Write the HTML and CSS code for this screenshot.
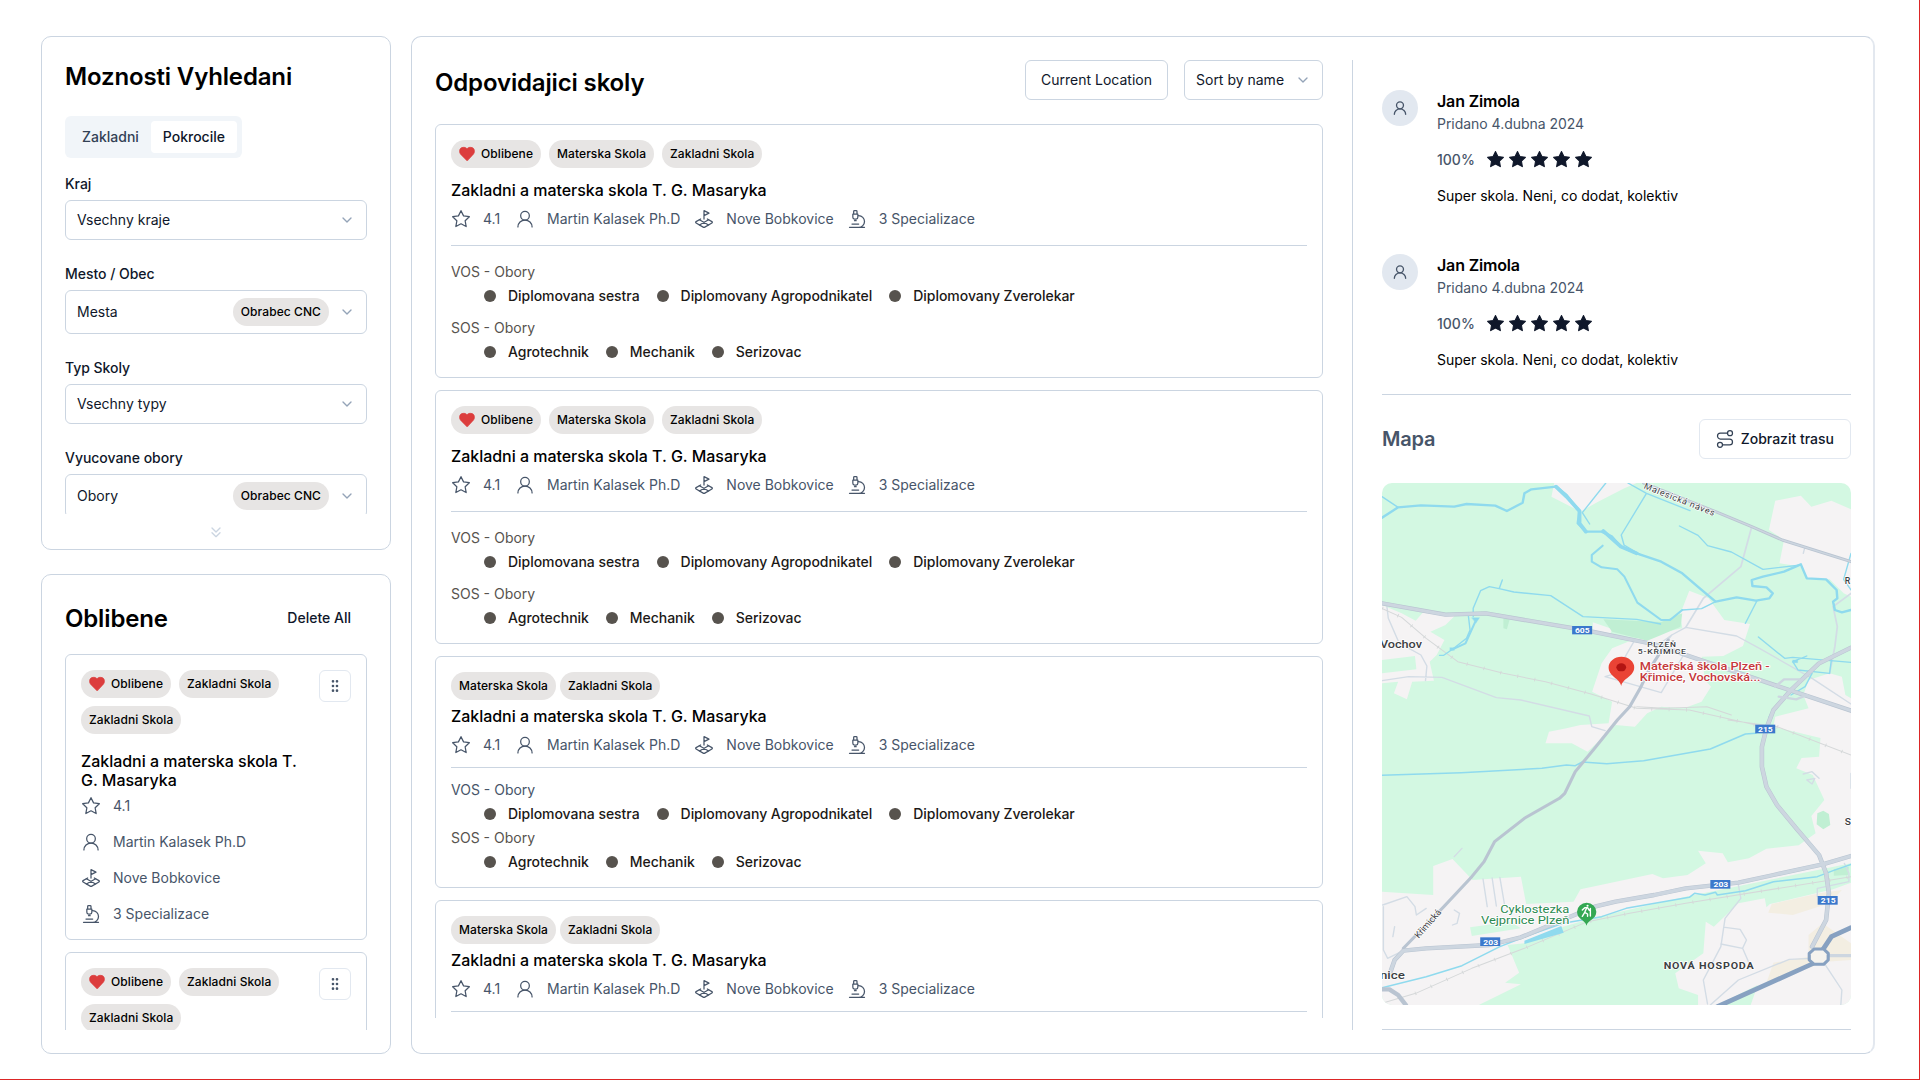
FILE: index.html
```html
<!DOCTYPE html>
<html lang="cs">
<head>
<meta charset="utf-8">
<title>Vyhledavani skol</title>
<link rel="stylesheet" href="styles.css">
</head>
<body>
<svg class="sprite" aria-hidden="true">
  <symbol id="chevron" viewBox="0 0 24 24"><path d="m6 9 6 6 6-6"/></symbol>
  <symbol id="chevrons" viewBox="0 0 24 24"><path d="m6 6 6 6 6-6M6 13l6 6 6-6"/></symbol>
  <symbol id="star" viewBox="0 0 24 24"><path d="M12 2l3.09 6.26L22 9.27l-5 4.87 1.18 6.88L12 17.77l-6.18 3.25L7 14.14 2 9.27l6.91-1.01z"/></symbol>
  <symbol id="user" viewBox="0 0 24 24"><circle cx="12" cy="8" r="5.2"/><path d="M20.5 21.5a8.5 8.3 0 0 0-17 0"/></symbol>
  <symbol id="plot" viewBox="0 0 24 24"><path d="m12 8 6-3-6-3v10"/><path d="m8 11.99-5.5 3.14a1 1 0 0 0 0 1.74l8.5 4.86a2 2 0 0 0 2 0l8.5-4.86a1 1 0 0 0 0-1.74L16 12"/><path d="m6.49 12.85 11.02 6.3M17.51 12.85 6.5 19.15"/></symbol>
  <symbol id="micro" viewBox="0 0 24 24"><path d="M6 18h8M3 22h18M14 22a7 7 0 1 0 0-14h-1M9 14h2M9 12a2 2 0 0 1-2-2V6h6v4a2 2 0 0 1-2 2ZM12 6V3a1 1 0 0 0-1-1H9a1 1 0 0 0-1 1v3"/></symbol>
  <symbol id="route" viewBox="0 0 24 24"><circle cx="6" cy="19" r="3"/><path d="M9 19h8.5a3.5 3.5 0 0 0 0-7h-11a3.5 3.5 0 0 1 0-7H15"/><circle cx="18" cy="5" r="3"/></symbol>
  <symbol id="grip" viewBox="0 0 24 24"><circle cx="9" cy="5" r="1"/><circle cx="9" cy="12" r="1"/><circle cx="9" cy="19" r="1"/><circle cx="15" cy="5" r="1"/><circle cx="15" cy="12" r="1"/><circle cx="15" cy="19" r="1"/></symbol>
  <symbol id="heart" viewBox="1.2 1.5 21.6 21"><path d="M19 14c1.49-1.46 3-3.21 3-5.5A5.5 5.5 0 0 0 16.5 3c-1.76 0-3 .5-4.5 2-1.5-1.5-2.74-2-4.5-2A5.5 5.5 0 0 0 2 8.5c0 2.300 1.500 4.050 3 5.500l7 7z"/></symbol>
</svg>

<div class="page">
  <aside class="sidebar">
    <section class="panel search">
      <h2 class="heading">Moznosti Vyhledani</h2>
      <div class="search-scroll">
        <div class="tabs"><span class="tab">Zakladni</span><span class="tab active">Pokrocile</span></div>
        <div class="field"><label>Kraj</label><div class="select"><span>Vsechny kraje</span><svg class="i16 chev"><use href="#chevron"/></svg></div></div>
        <div class="field"><label>Mesto / Obec</label><div class="select"><span>Mesta</span><b class="pill">Obrabec CNC</b><svg class="i16 chev"><use href="#chevron"/></svg></div></div>
        <div class="field"><label>Typ Skoly</label><div class="select"><span>Vsechny typy</span><svg class="i16 chev"><use href="#chevron"/></svg></div></div>
        <div class="field"><label>Vyucovane obory</label><div class="select"><span>Obory</span><b class="pill">Obrabec CNC</b><svg class="i16 chev"><use href="#chevron"/></svg></div></div>
      </div>
      <svg class="i16 more"><use href="#chevrons"/></svg>
    </section>

    <section class="panel favourites">
      <header class="fav-head"><h2 class="heading">Oblibene</h2><span class="ghost">Delete All</span></header>
      <div class="fav-list">
        <article class="card fav">
          <div class="fav-top">
            <div class="pills"><b class="pill"><svg class="heart"><use href="#heart"/></svg>Oblibene</b><b class="pill">Zakladni Skola</b><b class="pill">Zakladni Skola</b></div>
            <span class="grip"><svg class="i16"><use href="#grip"/></svg></span>
          </div>
          <h3>Zakladni a materska skola T. G. Masaryka</h3>
          <div class="meta column">
            <span><svg class="i20"><use href="#star"/></svg>4.1</span>
            <span><svg class="i20"><use href="#user"/></svg>Martin Kalasek Ph.D</span>
            <span><svg class="i20"><use href="#plot"/></svg>Nove Bobkovice</span>
            <span><svg class="i20"><use href="#micro"/></svg>3 Specializace</span>
          </div>
        </article>
        <article class="card fav">
          <div class="fav-top">
            <div class="pills"><b class="pill"><svg class="heart"><use href="#heart"/></svg>Oblibene</b><b class="pill">Zakladni Skola</b><b class="pill">Zakladni Skola</b></div>
            <span class="grip"><svg class="i16"><use href="#grip"/></svg></span>
          </div>
        </article>
      </div>
    </section>
  </aside>

  <main class="panel main">
    <section class="results">
      <header class="results-head">
        <h2 class="heading">Odpovidajici skoly</h2>
        <span class="button">Current Location</span>
        <div class="select sort"><span>Sort by name</span><svg class="i16 chev"><use href="#chevron"/></svg></div>
      </header>
      <div class="result-list">
        <article class="card">
          <div class="pills"><b class="pill"><svg class="heart"><use href="#heart"/></svg>Oblibene</b><b class="pill">Materska Skola</b><b class="pill">Zakladni Skola</b></div>
          <h3>Zakladni a materska skola T. G. Masaryka</h3>
          <div class="meta row"><span><svg class="i20"><use href="#star"/></svg>4.1</span><span><svg class="i20"><use href="#user"/></svg>Martin Kalasek Ph.D</span><span><svg class="i20"><use href="#plot"/></svg>Nove Bobkovice</span><span><svg class="i20"><use href="#micro"/></svg>3 Specializace</span></div>
          <div class="fields">
            <div><p>VOS - Obory</p><ul><li>Diplomovana sestra</li><li>Diplomovany Agropodnikatel</li><li>Diplomovany Zverolekar</li></ul></div>
            <div><p>SOS - Obory</p><ul><li>Agrotechnik</li><li>Mechanik</li><li>Serizovac</li></ul></div>
          </div>
        </article>
        <article class="card">
          <div class="pills"><b class="pill"><svg class="heart"><use href="#heart"/></svg>Oblibene</b><b class="pill">Materska Skola</b><b class="pill">Zakladni Skola</b></div>
          <h3>Zakladni a materska skola T. G. Masaryka</h3>
          <div class="meta row"><span><svg class="i20"><use href="#star"/></svg>4.1</span><span><svg class="i20"><use href="#user"/></svg>Martin Kalasek Ph.D</span><span><svg class="i20"><use href="#plot"/></svg>Nove Bobkovice</span><span><svg class="i20"><use href="#micro"/></svg>3 Specializace</span></div>
          <div class="fields">
            <div><p>VOS - Obory</p><ul><li>Diplomovana sestra</li><li>Diplomovany Agropodnikatel</li><li>Diplomovany Zverolekar</li></ul></div>
            <div><p>SOS - Obory</p><ul><li>Agrotechnik</li><li>Mechanik</li><li>Serizovac</li></ul></div>
          </div>
        </article>
        <article class="card compact">
          <div class="pills"><b class="pill">Materska Skola</b><b class="pill">Zakladni Skola</b></div>
          <h3>Zakladni a materska skola T. G. Masaryka</h3>
          <div class="meta row"><span><svg class="i20"><use href="#star"/></svg>4.1</span><span><svg class="i20"><use href="#user"/></svg>Martin Kalasek Ph.D</span><span><svg class="i20"><use href="#plot"/></svg>Nove Bobkovice</span><span><svg class="i20"><use href="#micro"/></svg>3 Specializace</span></div>
          <div class="fields">
            <div><p class="slate">VOS - Obory</p><ul><li>Diplomovana sestra</li><li>Diplomovany Agropodnikatel</li><li>Diplomovany Zverolekar</li></ul></div>
            <div><p>SOS - Obory</p><ul><li>Agrotechnik</li><li>Mechanik</li><li>Serizovac</li></ul></div>
          </div>
        </article>
        <article class="card compact">
          <div class="pills"><b class="pill">Materska Skola</b><b class="pill">Zakladni Skola</b></div>
          <h3>Zakladni a materska skola T. G. Masaryka</h3>
          <div class="meta row"><span><svg class="i20"><use href="#star"/></svg>4.1</span><span><svg class="i20"><use href="#user"/></svg>Martin Kalasek Ph.D</span><span><svg class="i20"><use href="#plot"/></svg>Nove Bobkovice</span><span><svg class="i20"><use href="#micro"/></svg>3 Specializace</span></div>
          <div class="fields"></div>
        </article>
      </div>
    </section>

    <section class="detail">
      <div class="reviews">
        <article class="review">
          <span class="avatar"><svg class="i16"><use href="#user"/></svg></span>
          <div><h4>Jan Zimola</h4><p class="date">Pridano 4.dubna 2024</p>
            <div class="rating"><span>100%</span><svg><use href="#star"/></svg><svg><use href="#star"/></svg><svg><use href="#star"/></svg><svg><use href="#star"/></svg><svg><use href="#star"/></svg></div>
            <p class="comment">Super skola. Neni, co dodat, kolektiv</p></div>
        </article>
        <article class="review">
          <span class="avatar"><svg class="i16"><use href="#user"/></svg></span>
          <div><h4>Jan Zimola</h4><p class="date">Pridano 4.dubna 2024</p>
            <div class="rating"><span>100%</span><svg><use href="#star"/></svg><svg><use href="#star"/></svg><svg><use href="#star"/></svg><svg><use href="#star"/></svg><svg><use href="#star"/></svg></div>
            <p class="comment">Super skola. Neni, co dodat, kolektiv</p></div>
        </article>
      </div>
      <header class="map-head"><h3>Mapa</h3><span class="button route"><svg class="i20"><use href="#route"/></svg>Zobrazit trasu</span></header>
      <svg class="map" viewBox="34 309 1337 1566" preserveAspectRatio="none">
        <rect x="34" y="309" width="1337" height="1566" fill="#d3f8e2"/>
        <g fill="#f5f3f4">
          <path d="M525 309L517 350L600 395L650 365L725 325L760 309Z"/>
          <path d="M1155 362L1228 347L1258 380L1315 362L1371 388V650L1350 640L1310 598H1250L1230 560L1167 550L1180 480L1137 450Z"/>
          <path d="M34 675L90 700L130 722L150 698L245 704L215 735L172 755L212 780L190 825L170 845L182 902L120 905L105 958L68 940L80 905L34 910V880L132 868L128 828L34 840Z"/>
          <path d="M910 632L965 655L1010 720L1083 732L1063 798L1007 828L945 830L955 900L972 920L945 965L895 985L830 980L790 1000L755 1040L700 1035L620 1115L575 1090H500L510 1055L560 1045L600 1035L680 1030L690 965L633 935L660 850L690 805L760 775L890 745L885 700Z"/>
          <path d="M635 727L690 747L685 762L635 752Z"/>
          <path d="M1250 900L1310 880L1345 890L1355 945L1371 955V1875H34V1535L180 1545V1458L235 1437L292 1500L430 1490L445 1572L580 1565L600 1528L805 1482L835 1495L905 1485L957 1450L935 1412L1005 1420L1020 1447L1080 1435L1130 1406L1222 1396L1270 1360L1258 1308L1295 1260L1262 1185L1215 1165L1230 1134L1280 1130L1284 1074L1150 1040L1155 1010L1250 985L1235 945Z"/>
        </g>
        <g fill="#d3f8e2">
          <path d="M392 1695L440 1690L550 1640L650 1610L900 1550L1371 1450V1508L1320 1528L1250 1545L1140 1572L1130 1582L1125 1555L1050 1570L980 1640L957 1625L950 1720L870 1780L880 1825L935 1845V1875H310L430 1813L385 1808L425 1778Z"/>
          <path d="M285 1642L400 1625L430 1645L290 1668Z"/><path d="M990 1875L1105 1815L1085 1875Z"/>
        </g>
        <path d="M665 718L830 726L890 700L885 740L830 765L790 782L690 755ZM380 716L398 718L390 748L380 745ZM1275 1300L1292 1292L1308 1302L1312 1335L1292 1348L1273 1333ZM1322 1467L1365 1460L1362 1485L1322 1487Z" fill="#c0efd3"/>
        <path d="M1145 1572L1280 1540L1345 1530L1310 1570L1205 1605L1135 1598ZM1150 1748L1250 1730V1665L1290 1630L1371 1690V1740L1300 1745L1130 1808Z" fill="#f3eee2"/>
        <g fill="none" stroke="#d3dce5" stroke-width="4">
          <path d="M48 680L52 715L80 782M85 790L145 825L162 858L158 902M34 902L110 890L205 892L360 953L430 960L625 1008L632 1040L670 1052M752 785L700 880L670 890L830 938L892 828M845 785L860 765L900 742L1045 768L1110 805L1260 895L1371 972M820 795L860 765M322 1497L334 1580M348 1494L360 1578M370 1492L384 1578M36 1575L105 1550L128 1580L132 1605L160 1585M38 1580V1710L50 1735L95 1712M240 1430L262 1405M240 1590L255 1600L248 1630L235 1635M1050 1515L1057 1555L1012 1615L1000 1700L950 1800L962 1872M1012 1642L1055 1648L1073 1680L1062 1705L1000 1692M1062 1705L1085 1760M970 1875L1050 1800L1195 1738L1260 1735M1295 1750L1345 1830L1342 1875M1352 1450L1365 1480V1505L1275 1525V1550M1235 1182L1260 1175L1280 1195M1245 1200L1268 1195L1260 1212ZM1371 1180V1225M70 1640L65 1670M1240 500L1235 520"/>
          <path d="M1088 440L1057 560L950 655L900 742M1320 680L1332 740L1325 800L1310 880M1371 640L1320 680" stroke-width="5"/>
        </g>
        <g fill="none" stroke="#d5d8d9" stroke-width="3">
          <path d="M34 685L90 712L160 775L250 845L380 880L500 905L630 942L760 985L910 990L1100 1035M1020 1020L1160 1040L1371 1125M760 980L840 985L960 980L1030 1005M34 1870L130 1840L290 1765L440 1705L620 1625L740 1600L900 1570L1371 1490"/>
          <path d="M34 685L90 712L160 775L250 845L380 880L500 905L630 942L760 985L910 990L1100 1035M1160 1040L1371 1125M34 1870L130 1840L290 1765L440 1705L620 1625L740 1600L900 1570L1371 1490" stroke-width="11" stroke-dasharray="2.500 47" stroke-linecap="butt"/>
        </g>
        <path d="M440 1682L545 1638L552 1658L440 1692Z" fill="#8fdaee"/>
        <g fill="none" stroke="#8fdaee" stroke-linejoin="round">
          <path d="M34 413L80 382L145 376L240 380L275 372L357 377L390 393L435 368L440 340L460 328L530 320L560 345L597 393L592 430L615 455L660 455L690 470L715 500L760 520L830 545L890 580L940 625L985 665L1045 652L1100 662L1138 655L1148 640L1130 622L1090 618L1088 600L1120 590L1180 575L1228 553L1245 595L1300 598L1330 630L1332 655L1320 665L1325 690L1345 697L1371 690" stroke-width="7"/>
          <path d="M530 320L560 350L597 393V430L615 455M665 453L715 500L760 520" stroke-width="11"/>
          <path d="M663 497L632 525V545L660 562L705 568L725 590L762 668L830 720H855L890 690" stroke-width="6"/>
          <path d="M34 350L80 382M672 309L605 398L626 432M735 309L788 340L912 392M788 340L716 465L724 495L770 524M882 438L935 466L962 497L1030 516L1120 568L1228 555M377 600L368 626L340 620L315 632L294 685V710M368 626L410 636L515 647L607 710L760 718L828 732M890 690L945 686L985 665M1103 662L1070 730M1107 771L1182 835L1205 832L1371 847M1205 845L1220 870L1310 880L1315 840M1205 845L1245 828M1260 880L1240 920L1200 945M1155 980L1138 1010V1045M1371 520L1350 598L1371 630M280 705L285 750L275 775L235 808L210 826H198" stroke-width="4"/>
          <path d="M34 1186L260 1178L490 1165L560 1155L585 1157L605 1146L675 1151L780 1142L970 1107L1070 1062L1100 1060M34 1823L160 1790L262 1757L370 1700L450 1667L550 1630L660 1610L730 1585L910 1552L925 1540L955 1545L985 1537L990 1545L1070 1532L1150 1505L1275 1490L1320 1472L1371 1453" stroke-width="4.500"/>
          <path d="M290 713h22l-10 16zM228 803h12v8h-12zM1205 840h14v8h-14z" fill="#8fdaee"/>
          <path d="M300 725L272 790L235 808" stroke-width="6"/>
        </g>
        <g fill="none" stroke-linejoin="round">
          <g stroke="#b9c4d1"><path d="M34 670L215 704L330 700L620 752L820 795L900 825L1195 930L1371 992" stroke-width="13"/><path d="M780 309L985 395L1088 440L1175 480L1371 545M850 780L795 870L770 925L740 980L705 1020L640 1105L585 1175L555 1240L540 1255L440 1315L355 1385L325 1445L290 1490L210 1580L95 1705" stroke-width="9"/><path d="M1371 803L1280 850L1200 930L1150 990L1130 1045L1117 1100V1160L1130 1220L1160 1275L1215 1345L1280 1425L1300 1480L1308 1540L1300 1620L1260 1700M55 1785L70 1740L95 1712L160 1705L340 1695L430 1672L560 1615L640 1580L700 1565L810 1545L900 1525L1050 1508L1150 1485L1290 1453L1371 1428M34 1828H55L80 1845L102 1875" stroke-width="13"/></g>
          <g stroke="#cdd6e0"><path d="M34 670L215 704L330 700L620 752L820 795L900 825L1195 930L1371 992" stroke-width="9"/><path d="M780 309L985 395L1088 440L1175 480L1371 545" stroke-width="4"/><path d="M1371 803L1280 850L1200 930L1150 990L1130 1045L1117 1100V1160L1130 1220L1160 1275L1215 1345L1280 1425L1300 1480L1308 1540L1300 1620L1260 1700M55 1785L70 1740L95 1712L160 1705L340 1695L430 1672L560 1615L640 1580L700 1565L810 1545L900 1525L1050 1508L1150 1485L1290 1453L1371 1428M1310 1727H1371" stroke-width="10"/><path d="M1155 920L1180 898H1225M1165 950L1215 958L1245 945" stroke-width="7"/></g>
          <g stroke="#87a1c1"><path d="M990 1880L1260 1752M1290 1710L1315 1670L1371 1643" stroke-width="14"/><path d="M1266 1707H1293L1306 1720V1740L1293 1753H1266L1252 1740V1720Z" fill="#f5f3ee" stroke-width="9"/></g>
        </g>
        <g fill="#3b78cc"><rect x="576" y="738" width="57" height="25"/><rect x="1098" y="1034" width="57" height="26"/><rect x="970" y="1500" width="57" height="26"/><rect x="1276" y="1548" width="57" height="26"/><rect x="314" y="1672" width="57" height="26"/></g>
        <g class="shield"><text x="584" y="759" textLength="42" lengthAdjust="spacingAndGlyphs">605</text><text x="1106" y="1055" textLength="42" lengthAdjust="spacingAndGlyphs">215</text><text x="979" y="1522" textLength="42" lengthAdjust="spacingAndGlyphs">203</text><text x="1285" y="1570" textLength="42" lengthAdjust="spacingAndGlyphs">215</text><text x="323" y="1694" textLength="42" lengthAdjust="spacingAndGlyphs">203</text></g>
        <g class="place">
          <text x="28" y="803" font-size="32" textLength="120" lengthAdjust="spacingAndGlyphs">Vochov</text>
          <text x="28" y="1797" font-size="32" textLength="71" lengthAdjust="spacingAndGlyphs">nice</text>
          <g letter-spacing="2"><text x="790" y="801" font-size="21" textLength="84" lengthAdjust="spacingAndGlyphs">PLZEŇ</text>
          <text x="763" y="822" font-size="21" textLength="140" lengthAdjust="spacingAndGlyphs">5-KŘIMICE</text>
          <text x="837" y="1767" font-size="26" textLength="259" lengthAdjust="spacingAndGlyphs" class="strong">NOVÁ HOSPODA</text></g>
          <text x="1353" y="612" font-size="25">R</text><text x="1353" y="1336" font-size="29">S</text>
          <text class="road" font-size="26" textLength="216" transform="translate(779 325) rotate(22.500)">Malesická náves</text>
          <text class="road" font-size="27" textLength="102" transform="translate(139 1676) rotate(-50)">Křimická</text>
        </g>
        <g class="poi" fill="#c5383b"><text x="769" y="871" textLength="370" lengthAdjust="spacingAndGlyphs">Mateřská škola Plzeň -</text><text x="769" y="902" textLength="344" lengthAdjust="spacingAndGlyphs">Křimice, Vochovská...</text></g>
        <g class="poi light" fill="#2b8a50"><text x="371" y="1598" textLength="197" lengthAdjust="spacingAndGlyphs">Cyklostezka</text><text x="316" y="1632" textLength="252" lengthAdjust="spacingAndGlyphs">Vejprnice Plzeň</text></g>
        <path d="M716 918C712 895 680 890 680 862A36 31 0 0 1 753 862C753 890 720 895 716 918Z" fill="#ea4335"/><ellipse cx="716" cy="862" rx="14" ry="12" fill="#b31412"/>
        <path d="M617 1637C614 1620 590 1618 590 1595A27 26 0 0 1 645 1595C645 1618 620 1620 617 1637Z" fill="#34a853"/>
        <path d="M605 1590L612 1583H620L625 1591M617 1585L612 1597L620 1602V1609M612 1597L605 1609M628 1585V1608" fill="none" stroke="#fff" stroke-width="4"/><circle cx="620" cy="1577" r="3" fill="#fff"/>
      </svg>
    </section>
  </main>
</div>
</body>
</html>
```
FILE: styles.css
```css
* { box-sizing: border-box; }

body {
  margin: 0;
  background: #fff;
  color: #000;
  font: 400 14px/20px Inter, "Noto Sans", sans-serif;
}

h2, h3, h4, p, ul { margin: 0; padding: 0; }

svg { flex: none; display: block; fill: none; stroke: currentColor; stroke-linecap: round; stroke-linejoin: round; }
.sprite { display: none; }
.i16 { width: 16px; height: 16px; stroke-width: 2; }
.i20 { width: 20px; height: 20px; stroke-width: 1.5; }

.page {
  width: 1920px;
  height: 1080px;
  padding: 36px 44px 25px 41px;
  border: 0 solid #dc2626;
  border-width: 0 1px 1px 0;
  display: grid;
  grid-template-columns: 350px 1464px;
  gap: 20px;
  overflow: hidden;
}

.panel { border: 1px solid #cbd5e1; border-radius: 10px; padding: 23px; }
.heading { font-size: 24px; line-height: 34px; font-weight: 600; letter-spacing: -0.15px; }

.sidebar { display: grid; grid-template-rows: 514px 480px; gap: 24px; }

.search { display: flex; flex-direction: column; align-items: center; padding-bottom: 8px; }
.search .heading { align-self: stretch; }
.search-scroll { flex: none; width: 100%; height: 398px; margin-top: 22px; overflow: hidden; }
.more { margin-top: 10px; color: #cbd5e1; }

.tabs {
  display: inline-flex;
  vertical-align: top;
  margin-bottom: 16px;
  padding: 5px;
  border-radius: 6px;
  background: #f1f5f9;
}
.tab { padding: 6px 12px; border-radius: 4px; font-weight: 500; color: #334155; }
.tab.active { background: #fff; color: #0f172a; }

.field { display: flex; flex-direction: column; gap: 6px; margin-bottom: 24px; }
.field label { font-weight: 500; color: #0f172a; letter-spacing: -0.03px; }

.select {
  min-height: 40px;
  padding: 7px 11px;
  border: 1px solid #cbd5e1;
  border-radius: 6px;
  display: flex;
  align-items: center;
  gap: 10px;
  color: #0f172a;
}
.select span { flex: 1; }
.chev { color: #94a3b8; }

.pill {
  height: 28px;
  padding: 0 8px;
  border-radius: 14px;
  background: #e7e5e4;
  color: #000;
  font-size: 12px;
  font-weight: 500;
  letter-spacing: 0.08px;
  display: inline-flex;
  align-items: center;
  white-space: nowrap;
}
.heart { width: 16px; height: 16px; margin-right: 6px; fill: #dc3d3d; stroke: #dc3d3d; stroke-width: 1; }
.pills { display: flex; flex-wrap: wrap; gap: 8px; }

.favourites { display: flex; flex-direction: column; }
.fav-head { height: 40px; display: flex; align-items: center; justify-content: space-between; }
.fav-head .heading { padding-top: 2px; }
.ghost { padding: 10px 16px; font-weight: 500; color: #0f172a; }
.fav-list { margin-top: 16px; height: 376px; overflow: hidden; }

.card { border: 1px solid #cbd5e1; border-radius: 6px; padding: 15px; margin-bottom: 12px; }
.card h3 { font-size: 16px; line-height: 20px; font-weight: 500; letter-spacing: -0.03px; margin: 12px 0 9px; }
.fav-top { display: flex; justify-content: space-between; align-items: flex-start; }
.fav-top .pills { width: 204px; }
.card.fav h3 { width: 226px; line-height: 19px; margin: 18px 0 6px; }
.grip {
  width: 32px;
  height: 32px;
  border: 1px solid #e2e8f0;
  border-radius: 6px;
  display: grid;
  place-items: center;
  color: #475569;
}

.meta { display: flex; gap: 14px; color: #475569; }
.meta span { display: flex; gap: 12px; }
.meta.column { flex-direction: column; gap: 16px; }
.meta.row span:first-child { margin-right: 1px; }
.meta.row span:last-child { margin-left: -1px; }

.main { display: grid; grid-template-columns: 888px 1fr; gap: 29px; border-right: 2px solid #e3e8ef; padding-right: 22px; }

.results-head { height: 40px; display: flex; gap: 16px; }
.results-head .heading { flex: 1; padding-top: 6px; }
.button { height: 40px; padding: 9px 15px; border: 1px solid #cbd5e1; border-radius: 6px; color: #0f172a; }
.sort { width: 139px; }

.result-list { margin-top: 24px; height: 894px; overflow: hidden; }
.fields { margin-top: 16px; padding-top: 16px; border-top: 1px solid #cbd5e1; display: flex; flex-direction: column; gap: 12px; }
.fields p { color: #57534e; }
.fields .slate { color: #475569; }
.fields ul { margin: 4px 0 0 33px; list-style: none; display: flex; gap: 17px; }
.fields li { display: flex; align-items: center; gap: 12px; font-weight: 500; letter-spacing: -0.04px; color: #1c1917; }
.fields li::before { content: ""; width: 12px; height: 12px; border-radius: 50%; background: #57534e; }
.compact .pills { gap: 4px; }
.compact h3 { margin-top: 6px; }
.compact .fields { margin-top: 12px; padding-top: 12px; gap: 4px; }

.detail { border-left: 1px solid #cbd5e1; padding-left: 29px; height: 970px; display: flex; flex-direction: column; }
.detail::after { content: ""; margin-top: 24px; border-top: 1px solid #cbd5e1; }
.reviews { height: 335px; padding-top: 30px; border-bottom: 1px solid #cbd5e1; }
.review { height: 164px; display: flex; gap: 19px; }
.avatar { width: 36px; height: 36px; border-radius: 50%; background: #e2e8f0; color: #475569; display: grid; place-items: center; }
.review h4 { font-size: 16px; line-height: 20px; font-weight: 600; margin-top: 1px; letter-spacing: -0.01em; }
.date { margin-top: 3px; color: #475569; letter-spacing: -0.03px; }
.rating { display: flex; align-items: center; gap: 3px; margin-top: 14px; height: 22px; color: #0f172a; }
.rating span { width: 46px; font-weight: 550; color: #475569; padding-top: 2px; }
.rating svg { width: 19px; height: 19px; stroke-width: 1.3; fill: currentColor; }
.comment { margin-top: 16px; }

.map-head { display: flex; justify-content: space-between; align-items: center; margin-top: 24px; }
.map-head h3 { font-size: 20px; line-height: 28px; font-weight: 600; letter-spacing: -0.2px; color: #475569; }
.route { display: flex; gap: 6px; padding-right: 16px; border-color: #e2e8f0; font-weight: 500; }
.route svg { color: #334155; }

.map { width: 100%; height: 522px; margin-top: 24px; border-radius: 10px; stroke: none; }
.map text { font-family: Roboto, sans-serif; }
.shield { fill: #fff; font-size: 23px; font-weight: 700; }
.place { fill: #3c4043; font-weight: 500; paint-order: stroke; stroke: #fff; stroke-width: 4; }
.place .strong { font-weight: 700; }
.place .road { font-weight: 400; }
.poi { font-size: 31px; font-weight: 500; paint-order: stroke; stroke: #fff; stroke-width: 5; }
.poi.light { font-size: 32px; font-weight: 400; }
```
